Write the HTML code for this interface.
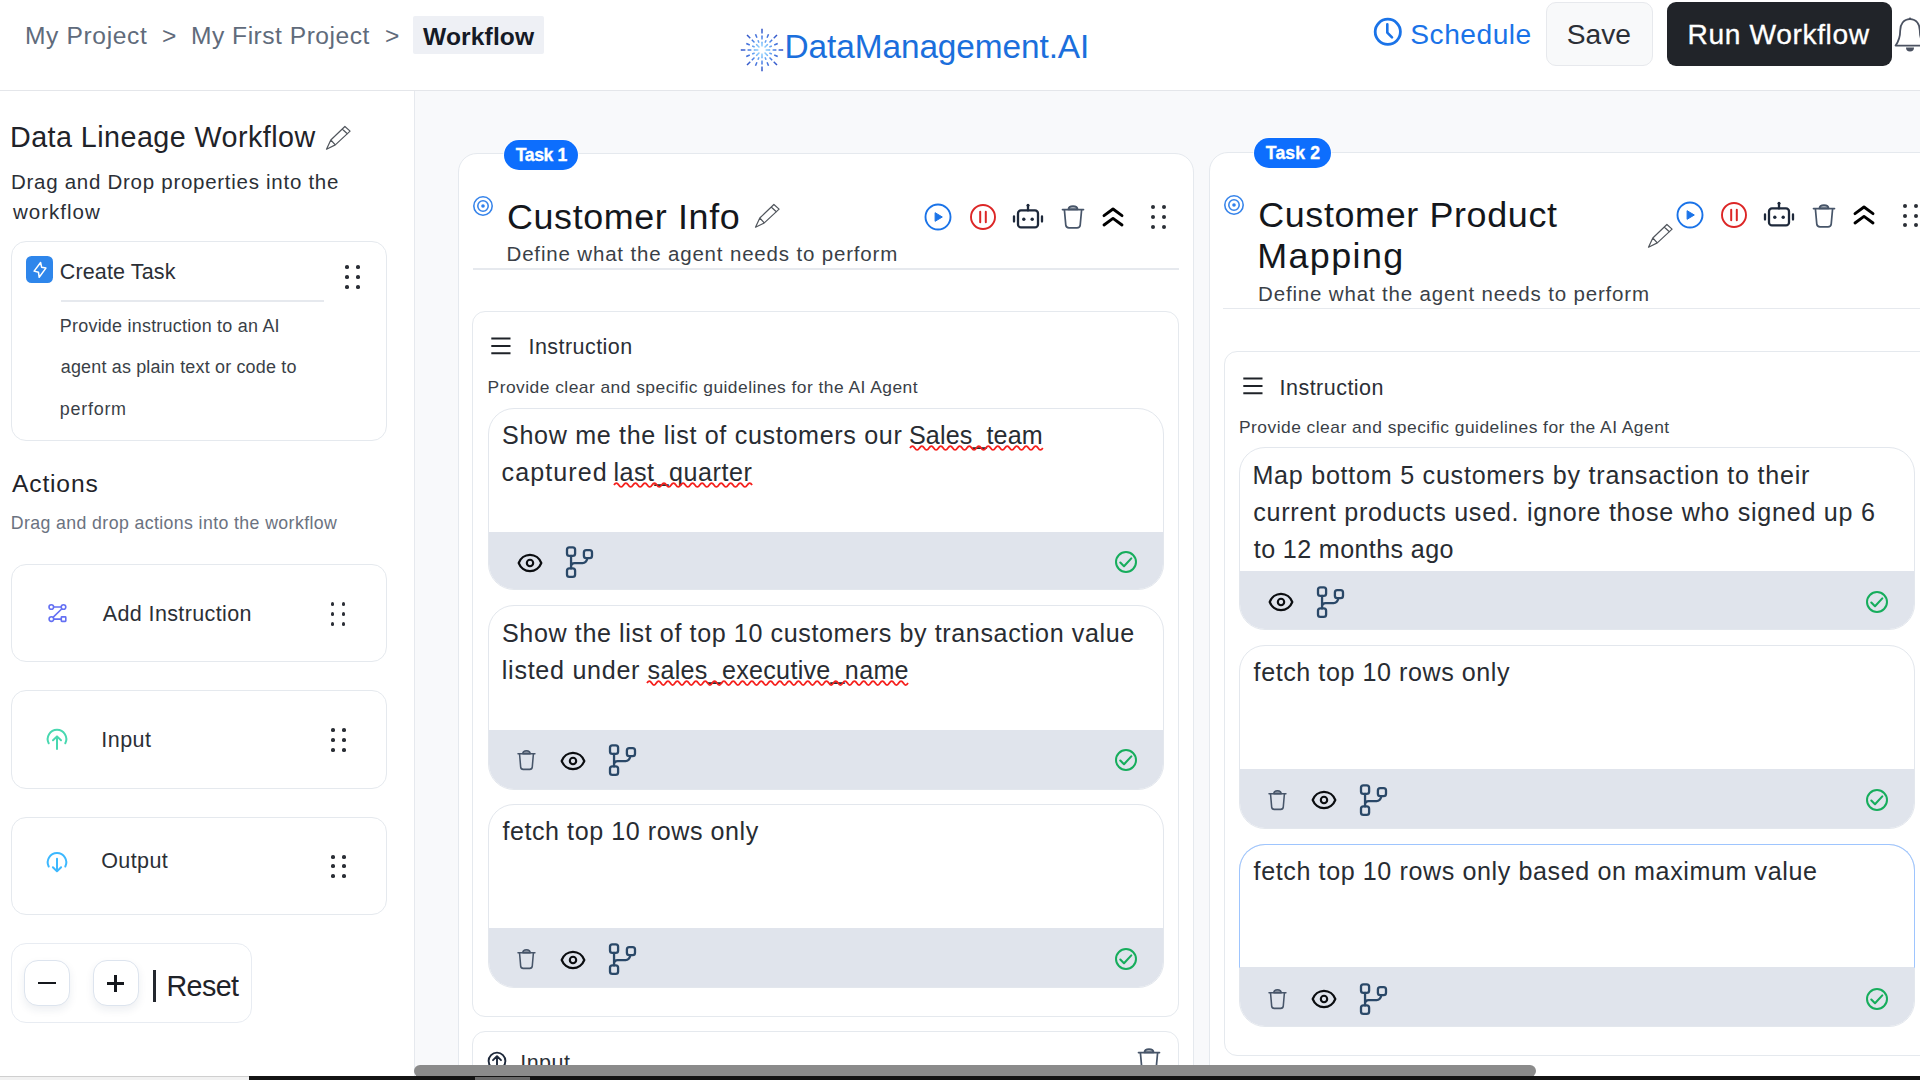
<!DOCTYPE html>
<html lang="en"><head><meta charset="utf-8"><title>Workflow - DataManagement.AI</title>
<style>
html,body{margin:0;padding:0;}
body{width:1920px;height:1080px;overflow:hidden;position:relative;background:#fff;font-family:"Liberation Sans", sans-serif;}
.t{position:absolute;white-space:nowrap;line-height:1;font-family:"Liberation Sans", sans-serif;}
svg{position:absolute;overflow:visible;}

.card{position:absolute;box-sizing:border-box;background:#fff;border:1.5px solid #e5e9ee;}
.dot{position:absolute;border-radius:50%;background:#2b2f36;}

</style></head><body>
<div style="position:absolute;left:0px;top:0px;width:1920px;height:1080px;background:#f8f9fb;"></div>
<div style="position:absolute;left:0px;top:91px;width:413.5px;height:985px;background:#fff;border-right:1.5px solid #e6e9ee;"></div>
<div style="position:absolute;left:0px;top:0px;width:1920px;height:90px;background:#fff;border-bottom:1.5px solid #e4e6ea;"></div>
<span class="t" style="left:25.00px;top:24.48px;font-size:24.6px;font-weight:400;color:#606b7b;letter-spacing:0.630px;">My Project</span>
<span class="t" style="left:162.00px;top:24.48px;font-size:24.6px;font-weight:400;color:#606b7b;letter-spacing:0.000px;">&gt;</span>
<span class="t" style="left:191.00px;top:24.48px;font-size:24.6px;font-weight:400;color:#606b7b;letter-spacing:0.502px;">My First Project</span>
<span class="t" style="left:385.00px;top:24.48px;font-size:24.6px;font-weight:400;color:#606b7b;letter-spacing:0.000px;">&gt;</span>
<div style="position:absolute;left:413px;top:15.5px;width:131px;height:38.5px;background:#eef0f5;border-radius:2px;"></div>
<span class="t" style="left:423.00px;top:24.98px;font-size:24.6px;font-weight:700;color:#151a26;letter-spacing:0.131px;">Workflow</span>
<svg style="left:737.7px;top:26.299999999999997px" width="48" height="48" viewBox="-24 -24 48 48"><defs><radialGradient id="sg" gradientUnits="userSpaceOnUse" cx="0" cy="0" r="21"><stop offset="0" stop-color="#b9e6ff"/><stop offset="0.3" stop-color="#7cc0fb"/><stop offset="0.6" stop-color="#4a7fe6"/><stop offset="1" stop-color="#3152c4"/></radialGradient></defs><g stroke="url(#sg)" stroke-width="1.5" stroke-linecap="butt" fill="none"><path d="M3.60 0.00L8.20 0.01"/><path d="M10.60 0.00L14.40 0.01"/><path d="M16.60 0.00L21.20 0.01"/><path d="M7.30 3.02L9.79 4.06"/><path d="M12.20 5.05L15.71 6.51"/><path d="M2.55 2.55L5.80 5.80"/><path d="M7.50 7.50L10.18 10.18"/><path d="M11.74 11.74L14.99 14.99"/><path d="M3.02 7.30L4.06 9.79"/><path d="M5.05 12.20L6.51 15.71"/><path d="M0.00 3.60L0.01 8.20"/><path d="M0.00 10.60L0.01 14.40"/><path d="M0.00 16.60L0.01 21.20"/><path d="M-3.02 7.30L-4.06 9.79"/><path d="M-5.05 12.20L-6.51 15.71"/><path d="M-2.55 2.55L-5.80 5.80"/><path d="M-7.50 7.50L-10.18 10.18"/><path d="M-11.74 11.74L-14.99 14.99"/><path d="M-7.30 3.02L-9.79 4.06"/><path d="M-12.20 5.05L-15.71 6.51"/><path d="M-3.60 0.00L-8.20 0.01"/><path d="M-10.60 0.00L-14.40 0.01"/><path d="M-16.60 0.00L-21.20 0.01"/><path d="M-7.30 -3.02L-9.79 -4.06"/><path d="M-12.20 -5.05L-15.71 -6.51"/><path d="M-2.55 -2.55L-5.80 -5.80"/><path d="M-7.50 -7.50L-10.18 -10.18"/><path d="M-11.74 -11.74L-14.99 -14.99"/><path d="M-3.02 -7.30L-4.06 -9.79"/><path d="M-5.05 -12.20L-6.51 -15.71"/><path d="M-0.00 -3.60L0.01 -8.20"/><path d="M-0.00 -10.60L0.01 -14.40"/><path d="M-0.00 -16.60L0.01 -21.20"/><path d="M3.02 -7.30L4.06 -9.79"/><path d="M5.05 -12.20L6.51 -15.71"/><path d="M2.55 -2.55L5.80 -5.80"/><path d="M7.50 -7.50L10.18 -10.18"/><path d="M11.74 -11.74L14.99 -14.99"/><path d="M7.30 -3.02L9.79 -4.06"/><path d="M12.20 -5.05L15.71 -6.51"/></g></svg>
<span class="t" style="left:784.60px;top:30.42px;font-size:33.41px;font-weight:400;color:#1b6fdc;letter-spacing:-0.107px;">DataManagement.AI</span>
<svg style="left:1372px;top:16px" width="32" height="32" viewBox="0 0 32 32"><circle cx="15.8" cy="15.8" r="12.6" fill="none" stroke="#1a73e8" stroke-width="2.8"/><path d="M15.3 8.2V16.6L20 21.4" fill="none" stroke="#1a73e8" stroke-width="2.6" stroke-linecap="round" stroke-linejoin="round"/></svg>
<span class="t" style="left:1410.25px;top:20.44px;font-size:28.19px;font-weight:400;color:#1a73e8;letter-spacing:0.498px;">Schedule</span>
<div style="position:absolute;left:1546px;top:2px;width:106.5px;height:63.5px;box-sizing:border-box;background:#f8f9fa;border:1.5px solid #e7e9ed;border-radius:10px;"></div>
<span class="t" style="left:1566.80px;top:20.44px;font-size:28.19px;font-weight:400;color:#2b2f36;letter-spacing:-0.024px;">Save</span>
<div style="position:absolute;left:1666.5px;top:1.75px;width:225.0px;height:64.25px;background:#212429;border-radius:9px;"></div>
<span class="t" style="left:1687.60px;top:20.44px;font-size:28.19px;font-weight:400;color:#ffffff;letter-spacing:0.594px;-webkit-text-stroke:0.3px #fff;">Run Workflow</span>
<svg style="left:1894px;top:16px" width="32" height="38" viewBox="0 0 32 38"><path d="M16 3.2C9.5 3.2 6.2 8.4 6.2 14.5C6.2 21 4.4 25.6 1.6 29.6H30.4C27.6 25.6 25.8 21 25.8 14.5C25.8 8.4 22.5 3.2 16 3.2Z" fill="none" stroke="#4b5261" stroke-width="1.8" stroke-linejoin="round"/><circle cx="16" cy="2.6" r="1.2" fill="#4b5261"/><path d="M12 31.5a4 4 0 0 0 8 0Z" fill="#4b5261"/></svg>
<span class="t" style="left:10.00px;top:122.91px;font-size:28.7px;font-weight:400;color:#1f2329;letter-spacing:0.458px;">Data Lineage Workflow</span>
<svg style="left:325.5px;top:126.3px" width="24.6" height="24" viewBox="0 0 24.6 24"><path d="M0.5 23.2L4.8 14L18.9 0.5L24.1 5.1L9.3 18.9Z M4.8 14L9.3 18.9 M16.2 3L21.3 7.8" fill="none" stroke="#50555c" stroke-width="1.2" stroke-linejoin="round" stroke-linecap="round"/></svg>
<span class="t" style="left:11.00px;top:171.95px;font-size:20.5px;font-weight:400;color:#2b2f36;letter-spacing:0.723px;">Drag and Drop properties into the</span>
<span class="t" style="left:13.00px;top:202.05px;font-size:20.5px;font-weight:400;color:#2b2f36;letter-spacing:1.010px;">workflow</span>
<div class="card" style="left:11px;top:240.5px;width:376px;height:200px;border-radius:15px;"></div>
<div style="position:absolute;left:25.7px;top:255.6px;width:27.8px;height:27.6px;border-radius:5.5px;background:#2e86eb;"></div>
<svg style="left:25.7px;top:255.6px" width="28" height="28" viewBox="0 0 28 28"><path d="M14.6 6.5L8.1 15.1L12.5 16.3L13.2 21.3L19.9 12.1L15.6 11.2Z" fill="none" stroke="#fff" stroke-width="1.5" stroke-linejoin="round"/></svg>
<span class="t" style="left:59.80px;top:261.68px;font-size:21.52px;font-weight:400;color:#2b2f36;letter-spacing:0.126px;">Create Task</span>
<div class="dot" style="left:344.85px;top:264.95px;width:3.7px;height:3.7px;background:#2b2f36"></div><div class="dot" style="left:344.85px;top:274.95px;width:3.7px;height:3.7px;background:#2b2f36"></div><div class="dot" style="left:344.85px;top:285.45px;width:3.7px;height:3.7px;background:#2b2f36"></div><div class="dot" style="left:356.25px;top:264.95px;width:3.7px;height:3.7px;background:#2b2f36"></div><div class="dot" style="left:356.25px;top:274.95px;width:3.7px;height:3.7px;background:#2b2f36"></div><div class="dot" style="left:356.25px;top:285.45px;width:3.7px;height:3.7px;background:#2b2f36"></div>
<div style="position:absolute;left:60.8px;top:300.4px;width:263.59999999999997px;height:1.400000000000034px;background:#e6e9ee;"></div>
<span class="t" style="left:59.80px;top:317.81px;font-size:17.94px;font-weight:400;color:#3a3f47;letter-spacing:0.238px;">Provide instruction to an AI</span>
<span class="t" style="left:60.80px;top:359.41px;font-size:17.94px;font-weight:400;color:#3a3f47;letter-spacing:0.180px;">agent as plain text or code to</span>
<span class="t" style="left:59.80px;top:400.51px;font-size:17.94px;font-weight:400;color:#3a3f47;letter-spacing:0.740px;">perform</span>
<span class="t" style="left:12.00px;top:471.58px;font-size:24.6px;font-weight:400;color:#1f2329;letter-spacing:0.841px;">Actions</span>
<span class="t" style="left:10.80px;top:515.49px;font-size:17.73px;font-weight:400;color:#6b7280;letter-spacing:0.389px;">Drag and drop actions into the workflow</span>
<div class="card" style="left:11px;top:563.8px;width:376px;height:98.6px;border-radius:15px;"></div>
<svg style="left:46.5px;top:603px" width="21" height="21" viewBox="0 0 21 21"><g fill="none" stroke="#6470f3" stroke-width="1.6"><circle cx="4.3" cy="4" r="2.3"/><circle cx="16.5" cy="4" r="2.3"/><circle cx="4.4" cy="16.1" r="2.3"/><rect x="14.3" y="13.9" width="4.5" height="4.5" rx="0.6"/><path d="M6.6 4H14.2 M14.9 5.7L6 14.4 M6.7 16.1H14.3"/></g></svg>
<span class="t" style="left:102.80px;top:604.18px;font-size:21.52px;font-weight:400;color:#2b2f36;letter-spacing:0.368px;">Add Instruction</span>
<div class="dot" style="left:330.65px;top:602.35px;width:3.7px;height:3.7px;background:#2b2f36"></div><div class="dot" style="left:330.65px;top:612.05px;width:3.7px;height:3.7px;background:#2b2f36"></div><div class="dot" style="left:330.65px;top:622.05px;width:3.7px;height:3.7px;background:#2b2f36"></div><div class="dot" style="left:341.65px;top:602.35px;width:3.7px;height:3.7px;background:#2b2f36"></div><div class="dot" style="left:341.65px;top:612.05px;width:3.7px;height:3.7px;background:#2b2f36"></div><div class="dot" style="left:341.65px;top:622.05px;width:3.7px;height:3.7px;background:#2b2f36"></div>
<div class="card" style="left:11px;top:690px;width:376px;height:98.6px;border-radius:15px;"></div>
<svg style="left:45.9px;top:728.3px" width="22" height="22" viewBox="0 0 22 22"><g fill="none" stroke="#48d8b0" stroke-width="2" stroke-linecap="round" stroke-linejoin="round"><path d="M2.71 15.32A9.3 9.3 0 1 1 19.29 15.32"/><path d="M11 21V8.6 M7 12.3L11 8.4L15 12.3"/></g></svg>
<span class="t" style="left:101.20px;top:729.78px;font-size:21.52px;font-weight:400;color:#2b2f36;letter-spacing:0.506px;">Input</span>
<div class="dot" style="left:330.85px;top:728.15px;width:3.7px;height:3.7px;background:#2b2f36"></div><div class="dot" style="left:330.85px;top:738.15px;width:3.7px;height:3.7px;background:#2b2f36"></div><div class="dot" style="left:330.85px;top:748.35px;width:3.7px;height:3.7px;background:#2b2f36"></div><div class="dot" style="left:341.95px;top:728.15px;width:3.7px;height:3.7px;background:#2b2f36"></div><div class="dot" style="left:341.95px;top:738.15px;width:3.7px;height:3.7px;background:#2b2f36"></div><div class="dot" style="left:341.95px;top:748.35px;width:3.7px;height:3.7px;background:#2b2f36"></div>
<div class="card" style="left:11px;top:816.7px;width:376px;height:98px;border-radius:15px;"></div>
<svg style="left:45.9px;top:851px" width="22" height="22" viewBox="0 0 22 22"><g fill="none" stroke="#3cb8ff" stroke-width="2" stroke-linecap="round" stroke-linejoin="round"><path d="M2.71 15.5A9.3 9.3 0 1 1 19.29 15.5"/><path d="M11 7.8V20.2 M6.9 16.2L11 20.4L15.1 16.2"/></g></svg>
<span class="t" style="left:101.20px;top:850.88px;font-size:21.52px;font-weight:400;color:#2b2f36;letter-spacing:0.398px;">Output</span>
<div class="dot" style="left:330.85px;top:854.85px;width:3.7px;height:3.7px;background:#2b2f36"></div><div class="dot" style="left:330.85px;top:864.35px;width:3.7px;height:3.7px;background:#2b2f36"></div><div class="dot" style="left:330.85px;top:874.35px;width:3.7px;height:3.7px;background:#2b2f36"></div><div class="dot" style="left:341.95px;top:854.85px;width:3.7px;height:3.7px;background:#2b2f36"></div><div class="dot" style="left:341.95px;top:864.35px;width:3.7px;height:3.7px;background:#2b2f36"></div><div class="dot" style="left:341.95px;top:874.35px;width:3.7px;height:3.7px;background:#2b2f36"></div>
<div class="card" style="left:11px;top:943px;width:241px;height:79.5px;border-radius:15px;border-color:#e8ecf2"></div>
<div style="position:absolute;left:23.6px;top:959.7px;width:46.199999999999996px;height:46.09999999999991px;box-sizing:border-box;background:#fff;border:1.5px solid #dde4ee;border-radius:14px;box-shadow:0 4px 8px rgba(30,50,90,0.08);"></div>
<div style="position:absolute;left:92.6px;top:959.7px;width:46.0px;height:46.09999999999991px;box-sizing:border-box;background:#fff;border:1.5px solid #dde4ee;border-radius:14px;box-shadow:0 4px 8px rgba(30,50,90,0.08);"></div>
<div style="position:absolute;left:38.4px;top:981.5px;width:17.200000000000003px;height:2.6000000000000227px;background:#15181d;"></div>
<div style="position:absolute;left:106.9px;top:982.0px;width:17.39999999999999px;height:2.6000000000000227px;background:#15181d;"></div>
<div style="position:absolute;left:114.3px;top:974.6px;width:2.6000000000000085px;height:17.399999999999977px;background:#15181d;"></div>
<div style="position:absolute;left:153.3px;top:970px;width:2.3999999999999773px;height:32px;background:#23272e;"></div>
<span class="t" style="left:166.40px;top:972.41px;font-size:28.7px;font-weight:400;color:#1f2329;letter-spacing:-0.593px;">Reset</span>
<div class="card" style="left:458px;top:153px;width:735.5px;height:1000px;border-radius:19px;"></div>
<div style="position:absolute;left:504.1px;top:139.6px;width:73.89999999999998px;height:30.0px;background:#0d6efd;border-radius:16px;box-shadow:0 0 0 0.8px rgba(255,255,255,0.7);"></div>
<span class="t" style="left:515.80px;top:146.68px;font-size:17.63px;font-weight:700;color:#fff;letter-spacing:-0.424px;-webkit-text-stroke:0.35px #fff;">Task 1</span>
<svg style="left:471.7px;top:195px" width="22" height="22" viewBox="-11 -11 22 22"><circle r="9.2" fill="none" stroke="#3583ea" stroke-width="1.55"/><circle r="5.2" fill="none" stroke="#3583ea" stroke-width="1.55"/><circle r="1.8" fill="#2f80ed"/></svg>
<span class="t" style="left:507.00px;top:200.43px;font-size:35.88px;font-weight:400;color:#14171c;letter-spacing:0.616px;">Customer Info</span>
<svg style="left:754.6px;top:204.3px" width="24.6" height="24" viewBox="0 0 24.6 24"><path d="M0.5 23.2L4.8 14L18.9 0.5L24.1 5.1L9.3 18.9Z M4.8 14L9.3 18.9 M16.2 3L21.3 7.8" fill="none" stroke="#50555c" stroke-width="1.2" stroke-linejoin="round" stroke-linecap="round"/></svg>
<span class="t" style="left:506.50px;top:243.95px;font-size:20.5px;font-weight:400;color:#3a3f47;letter-spacing:0.830px;">Define what the agent needs to perform</span>
<svg style="left:923.1px;top:202px" width="30" height="30" viewBox="-15 -15 30 30"><circle r="12.5" fill="none" stroke="#1a73e8" stroke-width="1.9"/><path d="M-2.9 -4.3L4.3 0L-2.9 4.3Z" fill="#1a73e8" stroke="#1a73e8" stroke-width="1" stroke-linejoin="round"/></svg>
<svg style="left:967.9px;top:202px" width="30" height="30" viewBox="-15 -15 30 30"><circle r="12" fill="none" stroke="#dc2626" stroke-width="1.9"/><path d="M-2.8 -5.2V5.2 M2.8 -5.2V5.2" fill="none" stroke="#dc2626" stroke-width="2" stroke-linecap="round"/></svg>
<svg style="left:1011.5999999999999px;top:202.5px" width="32" height="28" viewBox="-16 -14 32 28"><g fill="none" stroke="#1e293b" stroke-width="2.3" stroke-linecap="round" stroke-linejoin="round"><rect x="-10" y="-6.6" width="20" height="17" rx="3"/><path d="M0 -6.6V-11.6 M-14 -0.5V4.5 M14 -0.5V4.5"/></g><circle cx="0" cy="-11.7" r="1.5" fill="#1e293b"/><circle cx="-4.2" cy="2.3" r="1.7" fill="#1e293b"/><circle cx="4.2" cy="2.3" r="1.7" fill="#1e293b"/></svg>
<svg style="left:1059.5px;top:204.0px" width="26.0" height="26.0" viewBox="-13 -13 26 26" preserveAspectRatio="none"><g fill="none" stroke="#475569" stroke-width="1.70" stroke-linecap="round" stroke-linejoin="round"><path d="M-10.5 -7.4H10.5"/><path d="M-4.6 -7.6C-4.4 -10.4 -3 -10.9 0 -10.9C3 -10.9 4.4 -10.4 4.6 -7.6Z" fill="#475569" fill-opacity="0.45"/><path d="M-8.6 -7.2L-7.2 8.2C-7 10 -5.8 10.8 -4 10.8H4C5.8 10.8 7 10 7.2 8.2L8.6 -7.2"/></g></svg>
<svg style="left:1099.8px;top:203.5px" width="26" height="26" viewBox="-13 -13 26 26"><g fill="none" stroke="#000" stroke-width="2.9" stroke-linecap="round" stroke-linejoin="round"><path d="M-9 -1.4L0 -8L9 -1.4"/><path d="M-9 8L0 1.4L9 8"/></g></svg>
<div class="dot" style="left:1151.40px;top:205.30px;width:4.0px;height:4.0px;background:#2b2f36"></div><div class="dot" style="left:1151.40px;top:215.20px;width:4.0px;height:4.0px;background:#2b2f36"></div><div class="dot" style="left:1151.40px;top:224.90px;width:4.0px;height:4.0px;background:#2b2f36"></div><div class="dot" style="left:1162.00px;top:205.30px;width:4.0px;height:4.0px;background:#2b2f36"></div><div class="dot" style="left:1162.00px;top:215.20px;width:4.0px;height:4.0px;background:#2b2f36"></div><div class="dot" style="left:1162.00px;top:224.90px;width:4.0px;height:4.0px;background:#2b2f36"></div>
<div style="position:absolute;left:472.5px;top:268.3px;width:706.3px;height:1.5px;background:#e6e9ee;"></div>
<div class="card" style="left:472px;top:311px;width:707px;height:705.5px;border-radius:13px;"></div>
<svg style="left:491.2px;top:337px" width="20" height="18" viewBox="0 0 20 18"><path d="M0.3 1.5H19.5 M0.3 9H19.5 M0.3 16.3H19.5" stroke="#1f2329" stroke-width="1.9" fill="none"/></svg>
<span class="t" style="left:528.50px;top:337.33px;font-size:21.52px;font-weight:400;color:#2b2f36;letter-spacing:0.446px;">Instruction</span>
<span class="t" style="left:487.60px;top:379.05px;font-size:17.42px;font-weight:400;color:#3a3f47;letter-spacing:0.462px;">Provide clear and specific guidelines for the AI Agent</span>
<div style="position:absolute;box-sizing:border-box;left:487.5px;top:407.5px;width:676.2px;height:182.29999999999995px;border-radius:26px;background:#fff;border:1.5px solid #e3e7ed;overflow:hidden;"><div style="position:absolute;left:-2px;right:-2px;top:123.39999999999998px;bottom:-2px;background:#e0e4ec;"></div></div>
<span class="t" style="left:502.00px;top:423.04px;font-size:25.11px;font-weight:400;color:#282c32;letter-spacing:0.677px;">Show me the list of customers our</span>
<span class="t" style="left:909.00px;top:423.04px;font-size:25.11px;font-weight:400;color:#282c32;letter-spacing:0.124px;">Sales_team</span>
<svg style="left:909.5px;top:445.0px" width="132.79999999999995" height="6" viewBox="0 0 132.79999999999995 6"><path d="M0 3 q2.371 -4.0 4.743 0 q2.371 4.0 4.743 0 q2.371 -4.0 4.743 0 q2.371 4.0 4.743 0 q2.371 -4.0 4.743 0 q2.371 4.0 4.743 0 q2.371 -4.0 4.743 0 q2.371 4.0 4.743 0 q2.371 -4.0 4.743 0 q2.371 4.0 4.743 0 q2.371 -4.0 4.743 0 q2.371 4.0 4.743 0 q2.371 -4.0 4.743 0 q2.371 4.0 4.743 0 q2.371 -4.0 4.743 0 q2.371 4.0 4.743 0 q2.371 -4.0 4.743 0 q2.371 4.0 4.743 0 q2.371 -4.0 4.743 0 q2.371 4.0 4.743 0 q2.371 -4.0 4.743 0 q2.371 4.0 4.743 0 q2.371 -4.0 4.743 0 q2.371 4.0 4.743 0 q2.371 -4.0 4.743 0 q2.371 4.0 4.743 0 q2.371 -4.0 4.743 0 q2.371 4.0 4.743 0" fill="none" stroke="#f5201d" stroke-width="1.75"/></svg>
<span class="t" style="left:501.60px;top:460.24px;font-size:25.11px;font-weight:400;color:#282c32;letter-spacing:1.064px;">captured</span>
<span class="t" style="left:613.40px;top:460.24px;font-size:25.11px;font-weight:400;color:#282c32;letter-spacing:0.533px;">last_quarter</span>
<svg style="left:613.9px;top:482.2px" width="138.10000000000002" height="6" viewBox="0 0 138.10000000000002 6"><path d="M0 3 q2.381 -4.0 4.762 0 q2.381 4.0 4.762 0 q2.381 -4.0 4.762 0 q2.381 4.0 4.762 0 q2.381 -4.0 4.762 0 q2.381 4.0 4.762 0 q2.381 -4.0 4.762 0 q2.381 4.0 4.762 0 q2.381 -4.0 4.762 0 q2.381 4.0 4.762 0 q2.381 -4.0 4.762 0 q2.381 4.0 4.762 0 q2.381 -4.0 4.762 0 q2.381 4.0 4.762 0 q2.381 -4.0 4.762 0 q2.381 4.0 4.762 0 q2.381 -4.0 4.762 0 q2.381 4.0 4.762 0 q2.381 -4.0 4.762 0 q2.381 4.0 4.762 0 q2.381 -4.0 4.762 0 q2.381 4.0 4.762 0 q2.381 -4.0 4.762 0 q2.381 4.0 4.762 0 q2.381 -4.0 4.762 0 q2.381 4.0 4.762 0 q2.381 -4.0 4.762 0 q2.381 4.0 4.762 0 q2.381 -4.0 4.762 0" fill="none" stroke="#f5201d" stroke-width="1.75"/></svg>
<svg style="left:515.5px;top:551.5999999999999px" width="28" height="22" viewBox="-14 -11 28 22"><path d="M-11.3 0C-9.6 -4.6 -5.2 -8.1 0 -8.1C5.2 -8.1 9.6 -4.6 11.3 0C9.6 4.6 5.2 8.1 0 8.1C-5.2 8.1 -9.6 4.6 -11.3 0Z" fill="none" stroke="#0b0d10" stroke-width="2.2" stroke-linejoin="round"/><circle r="3.2" fill="none" stroke="#0b0d10" stroke-width="2.1"/></svg>
<svg style="left:563.9px;top:546.1999999999999px" width="30" height="32" viewBox="0 0 30 32"><g fill="none" stroke="#2a4868" stroke-width="2.3" stroke-linejoin="round" stroke-linecap="round"><rect x="3" y="1.4" width="8.1" height="8.4" rx="2.4"/><rect x="3" y="22.4" width="8.1" height="8.4" rx="2.4"/><rect x="19.9" y="4.1" width="8.1" height="8.0" rx="2.4"/><path d="M7.05 9.8V22.4 M23.4 12.3C22.6 15.6 21.4 17.1 18.6 17.1H10.6C8.4 17.1 7.05 18.4 7.05 20.8"/></g></svg>
<svg style="left:1112.5px;top:548.8px" width="26" height="26" viewBox="-13 -13 26 26"><circle r="10" fill="none" stroke="#16ad5c" stroke-width="2"/><path d="M-5.7 0.6L-2 4.2L5.3 -3.6" fill="none" stroke="#16ad5c" stroke-width="2.1" stroke-linecap="round" stroke-linejoin="round"/></svg>
<div style="position:absolute;box-sizing:border-box;left:487.5px;top:605.3px;width:676.2px;height:184.5px;border-radius:26px;background:#fff;border:1.5px solid #e3e7ed;overflow:hidden;"><div style="position:absolute;left:-2px;right:-2px;top:123.40000000000009px;bottom:-2px;background:#e0e4ec;"></div></div>
<span class="t" style="left:502.00px;top:620.94px;font-size:25.11px;font-weight:400;color:#282c32;letter-spacing:0.606px;">Show the list of top 10 customers by transaction value</span>
<span class="t" style="left:501.80px;top:658.14px;font-size:25.11px;font-weight:400;color:#282c32;letter-spacing:0.713px;">listed under</span>
<span class="t" style="left:647.60px;top:658.14px;font-size:25.11px;font-weight:400;color:#282c32;letter-spacing:0.291px;">sales_executive_name</span>
<svg style="left:647.1px;top:680.1px" width="261.0" height="6" viewBox="0 0 261.0 6"><path d="M0 3 q2.330 -4.0 4.661 0 q2.330 4.0 4.661 0 q2.330 -4.0 4.661 0 q2.330 4.0 4.661 0 q2.330 -4.0 4.661 0 q2.330 4.0 4.661 0 q2.330 -4.0 4.661 0 q2.330 4.0 4.661 0 q2.330 -4.0 4.661 0 q2.330 4.0 4.661 0 q2.330 -4.0 4.661 0 q2.330 4.0 4.661 0 q2.330 -4.0 4.661 0 q2.330 4.0 4.661 0 q2.330 -4.0 4.661 0 q2.330 4.0 4.661 0 q2.330 -4.0 4.661 0 q2.330 4.0 4.661 0 q2.330 -4.0 4.661 0 q2.330 4.0 4.661 0 q2.330 -4.0 4.661 0 q2.330 4.0 4.661 0 q2.330 -4.0 4.661 0 q2.330 4.0 4.661 0 q2.330 -4.0 4.661 0 q2.330 4.0 4.661 0 q2.330 -4.0 4.661 0 q2.330 4.0 4.661 0 q2.330 -4.0 4.661 0 q2.330 4.0 4.661 0 q2.330 -4.0 4.661 0 q2.330 4.0 4.661 0 q2.330 -4.0 4.661 0 q2.330 4.0 4.661 0 q2.330 -4.0 4.661 0 q2.330 4.0 4.661 0 q2.330 -4.0 4.661 0 q2.330 4.0 4.661 0 q2.330 -4.0 4.661 0 q2.330 4.0 4.661 0 q2.330 -4.0 4.661 0 q2.330 4.0 4.661 0 q2.330 -4.0 4.661 0 q2.330 4.0 4.661 0 q2.330 -4.0 4.661 0 q2.330 4.0 4.661 0 q2.330 -4.0 4.661 0 q2.330 4.0 4.661 0 q2.330 -4.0 4.661 0 q2.330 4.0 4.661 0 q2.330 -4.0 4.661 0 q2.330 4.0 4.661 0 q2.330 -4.0 4.661 0 q2.330 4.0 4.661 0 q2.330 -4.0 4.661 0 q2.330 4.0 4.661 0" fill="none" stroke="#f5201d" stroke-width="1.75"/></svg>
<svg style="left:515.8309734513274px;top:749.0028318584071px" width="20.93805309734513" height="22.194336283185837" viewBox="-13 -13 26 26" preserveAspectRatio="none"><g fill="none" stroke="#475569" stroke-width="1.92" stroke-linecap="round" stroke-linejoin="round"><path d="M-10.5 -7.4H10.5"/><path d="M-4.6 -7.6C-4.4 -10.4 -3 -10.9 0 -10.9C3 -10.9 4.4 -10.4 4.6 -7.6Z" fill="#475569" fill-opacity="0.45"/><path d="M-8.6 -7.2L-7.2 8.2C-7 10 -5.8 10.8 -4 10.8H4C5.8 10.8 7 10 7.2 8.2L8.6 -7.2"/></g></svg>
<svg style="left:558.8px;top:749.8px" width="28" height="22" viewBox="-14 -11 28 22"><path d="M-11.3 0C-9.6 -4.6 -5.2 -8.1 0 -8.1C5.2 -8.1 9.6 -4.6 11.3 0C9.6 4.6 5.2 8.1 0 8.1C-5.2 8.1 -9.6 4.6 -11.3 0Z" fill="none" stroke="#0b0d10" stroke-width="2.2" stroke-linejoin="round"/><circle r="3.2" fill="none" stroke="#0b0d10" stroke-width="2.1"/></svg>
<svg style="left:606.9px;top:744.4px" width="30" height="32" viewBox="0 0 30 32"><g fill="none" stroke="#2a4868" stroke-width="2.3" stroke-linejoin="round" stroke-linecap="round"><rect x="3" y="1.4" width="8.1" height="8.4" rx="2.4"/><rect x="3" y="22.4" width="8.1" height="8.4" rx="2.4"/><rect x="19.9" y="4.1" width="8.1" height="8.0" rx="2.4"/><path d="M7.05 9.8V22.4 M23.4 12.3C22.6 15.6 21.4 17.1 18.6 17.1H10.6C8.4 17.1 7.05 18.4 7.05 20.8"/></g></svg>
<svg style="left:1112.5px;top:747px" width="26" height="26" viewBox="-13 -13 26 26"><circle r="10" fill="none" stroke="#16ad5c" stroke-width="2"/><path d="M-5.7 0.6L-2 4.2L5.3 -3.6" fill="none" stroke="#16ad5c" stroke-width="2.1" stroke-linecap="round" stroke-linejoin="round"/></svg>
<div style="position:absolute;box-sizing:border-box;left:487.5px;top:804.4px;width:676.2px;height:183.60000000000002px;border-radius:26px;background:#fff;border:1.5px solid #e3e7ed;overflow:hidden;"><div style="position:absolute;left:-2px;right:-2px;top:123.0px;bottom:-2px;background:#e0e4ec;"></div></div>
<span class="t" style="left:502.40px;top:819.14px;font-size:25.11px;font-weight:400;color:#282c32;letter-spacing:0.552px;">fetch top 10 rows only</span>
<svg style="left:515.8309734513274px;top:947.7028318584072px" width="20.93805309734513" height="22.194336283185837" viewBox="-13 -13 26 26" preserveAspectRatio="none"><g fill="none" stroke="#475569" stroke-width="1.92" stroke-linecap="round" stroke-linejoin="round"><path d="M-10.5 -7.4H10.5"/><path d="M-4.6 -7.6C-4.4 -10.4 -3 -10.9 0 -10.9C3 -10.9 4.4 -10.4 4.6 -7.6Z" fill="#475569" fill-opacity="0.45"/><path d="M-8.6 -7.2L-7.2 8.2C-7 10 -5.8 10.8 -4 10.8H4C5.8 10.8 7 10 7.2 8.2L8.6 -7.2"/></g></svg>
<svg style="left:558.8px;top:948.5px" width="28" height="22" viewBox="-14 -11 28 22"><path d="M-11.3 0C-9.6 -4.6 -5.2 -8.1 0 -8.1C5.2 -8.1 9.6 -4.6 11.3 0C9.6 4.6 5.2 8.1 0 8.1C-5.2 8.1 -9.6 4.6 -11.3 0Z" fill="none" stroke="#0b0d10" stroke-width="2.2" stroke-linejoin="round"/><circle r="3.2" fill="none" stroke="#0b0d10" stroke-width="2.1"/></svg>
<svg style="left:606.9px;top:943.1px" width="30" height="32" viewBox="0 0 30 32"><g fill="none" stroke="#2a4868" stroke-width="2.3" stroke-linejoin="round" stroke-linecap="round"><rect x="3" y="1.4" width="8.1" height="8.4" rx="2.4"/><rect x="3" y="22.4" width="8.1" height="8.4" rx="2.4"/><rect x="19.9" y="4.1" width="8.1" height="8.0" rx="2.4"/><path d="M7.05 9.8V22.4 M23.4 12.3C22.6 15.6 21.4 17.1 18.6 17.1H10.6C8.4 17.1 7.05 18.4 7.05 20.8"/></g></svg>
<svg style="left:1112.5px;top:945.7px" width="26" height="26" viewBox="-13 -13 26 26"><circle r="10" fill="none" stroke="#16ad5c" stroke-width="2"/><path d="M-5.7 0.6L-2 4.2L5.3 -3.6" fill="none" stroke="#16ad5c" stroke-width="2.1" stroke-linecap="round" stroke-linejoin="round"/></svg>
<div class="card" style="left:472px;top:1031px;width:707px;height:200px;border-radius:13px;"></div>
<svg style="left:485.7px;top:1050px" width="22" height="22" viewBox="-11 -11 22 22"><g fill="none" stroke="#1e293b" stroke-width="1.9" stroke-linecap="round" stroke-linejoin="round"><circle r="8.4"/><path d="M0 5V-4.6 M-4 -0.8L0 -4.8L4 -0.8"/></g></svg>
<span class="t" style="left:520.20px;top:1052.58px;font-size:21.52px;font-weight:400;color:#2b2f36;letter-spacing:0.481px;">Input</span>
<svg style="left:1135.5px;top:1047.0px" width="26.0" height="26.0" viewBox="-13 -13 26 26" preserveAspectRatio="none"><g fill="none" stroke="#475569" stroke-width="1.70" stroke-linecap="round" stroke-linejoin="round"><path d="M-10.5 -7.4H10.5"/><path d="M-4.6 -7.6C-4.4 -10.4 -3 -10.9 0 -10.9C3 -10.9 4.4 -10.4 4.6 -7.6Z" fill="#475569" fill-opacity="0.45"/><path d="M-8.6 -7.2L-7.2 8.2C-7 10 -5.8 10.8 -4 10.8H4C5.8 10.8 7 10 7.2 8.2L8.6 -7.2"/></g></svg>
<div class="card" style="left:1209px;top:152.2px;width:800px;height:1000px;border-radius:19px;"></div>
<div style="position:absolute;left:1254px;top:138.4px;width:76.59999999999991px;height:29.799999999999983px;background:#0d6efd;border-radius:16px;box-shadow:0 0 0 0.8px rgba(255,255,255,0.7);"></div>
<span class="t" style="left:1265.80px;top:145.28px;font-size:17.63px;font-weight:700;color:#fff;letter-spacing:0.136px;-webkit-text-stroke:0.35px #fff;">Task 2</span>
<svg style="left:1223px;top:193.6px" width="22" height="22" viewBox="-11 -11 22 22"><circle r="9.2" fill="none" stroke="#3583ea" stroke-width="1.55"/><circle r="5.2" fill="none" stroke="#3583ea" stroke-width="1.55"/><circle r="1.8" fill="#2f80ed"/></svg>
<span class="t" style="left:1258.20px;top:198.43px;font-size:35.88px;font-weight:400;color:#14171c;letter-spacing:0.644px;">Customer Product</span>
<span class="t" style="left:1257.20px;top:239.23px;font-size:35.88px;font-weight:400;color:#14171c;letter-spacing:1.398px;">Mapping</span>
<svg style="left:1647.8px;top:223.9px" width="24.6" height="24" viewBox="0 0 24.6 24"><path d="M0.5 23.2L4.8 14L18.9 0.5L24.1 5.1L9.3 18.9Z M4.8 14L9.3 18.9 M16.2 3L21.3 7.8" fill="none" stroke="#50555c" stroke-width="1.2" stroke-linejoin="round" stroke-linecap="round"/></svg>
<span class="t" style="left:1258.00px;top:283.55px;font-size:20.5px;font-weight:400;color:#3a3f47;letter-spacing:0.837px;">Define what the agent needs to perform</span>
<svg style="left:1674.6px;top:200.4px" width="30" height="30" viewBox="-15 -15 30 30"><circle r="12.5" fill="none" stroke="#1a73e8" stroke-width="1.9"/><path d="M-2.9 -4.3L4.3 0L-2.9 4.3Z" fill="#1a73e8" stroke="#1a73e8" stroke-width="1" stroke-linejoin="round"/></svg>
<svg style="left:1719.2px;top:200.4px" width="30" height="30" viewBox="-15 -15 30 30"><circle r="12" fill="none" stroke="#dc2626" stroke-width="1.9"/><path d="M-2.8 -5.2V5.2 M2.8 -5.2V5.2" fill="none" stroke="#dc2626" stroke-width="2" stroke-linecap="round"/></svg>
<svg style="left:1763.4px;top:201px" width="32" height="28" viewBox="-16 -14 32 28"><g fill="none" stroke="#1e293b" stroke-width="2.3" stroke-linecap="round" stroke-linejoin="round"><rect x="-10" y="-6.6" width="20" height="17" rx="3"/><path d="M0 -6.6V-11.6 M-14 -0.5V4.5 M14 -0.5V4.5"/></g><circle cx="0" cy="-11.7" r="1.5" fill="#1e293b"/><circle cx="-4.2" cy="2.3" r="1.7" fill="#1e293b"/><circle cx="4.2" cy="2.3" r="1.7" fill="#1e293b"/></svg>
<svg style="left:1810.6px;top:202.6px" width="26.0" height="26.0" viewBox="-13 -13 26 26" preserveAspectRatio="none"><g fill="none" stroke="#475569" stroke-width="1.70" stroke-linecap="round" stroke-linejoin="round"><path d="M-10.5 -7.4H10.5"/><path d="M-4.6 -7.6C-4.4 -10.4 -3 -10.9 0 -10.9C3 -10.9 4.4 -10.4 4.6 -7.6Z" fill="#475569" fill-opacity="0.45"/><path d="M-8.6 -7.2L-7.2 8.2C-7 10 -5.8 10.8 -4 10.8H4C5.8 10.8 7 10 7.2 8.2L8.6 -7.2"/></g></svg>
<svg style="left:1851.3px;top:202px" width="26" height="26" viewBox="-13 -13 26 26"><g fill="none" stroke="#000" stroke-width="2.9" stroke-linecap="round" stroke-linejoin="round"><path d="M-9 -1.4L0 -8L9 -1.4"/><path d="M-9 8L0 1.4L9 8"/></g></svg>
<div class="dot" style="left:1903.00px;top:203.60px;width:4.0px;height:4.0px;background:#2b2f36"></div><div class="dot" style="left:1903.00px;top:213.50px;width:4.0px;height:4.0px;background:#2b2f36"></div><div class="dot" style="left:1903.00px;top:223.20px;width:4.0px;height:4.0px;background:#2b2f36"></div><div class="dot" style="left:1913.60px;top:203.60px;width:4.0px;height:4.0px;background:#2b2f36"></div><div class="dot" style="left:1913.60px;top:213.50px;width:4.0px;height:4.0px;background:#2b2f36"></div><div class="dot" style="left:1913.60px;top:223.20px;width:4.0px;height:4.0px;background:#2b2f36"></div>
<div style="position:absolute;left:1223px;top:307.5px;width:702px;height:1.5px;background:#e6e9ee;"></div>
<div class="card" style="left:1223.5px;top:351px;width:800px;height:704.5px;border-radius:13px;"></div>
<svg style="left:1243px;top:377px" width="20" height="18" viewBox="0 0 20 18"><path d="M0.3 1.5H19.5 M0.3 9H19.5 M0.3 16.3H19.5" stroke="#1f2329" stroke-width="1.9" fill="none"/></svg>
<span class="t" style="left:1279.60px;top:377.68px;font-size:21.52px;font-weight:400;color:#2b2f36;letter-spacing:0.461px;">Instruction</span>
<span class="t" style="left:1239.00px;top:419.05px;font-size:17.42px;font-weight:400;color:#3a3f47;letter-spacing:0.466px;">Provide clear and specific guidelines for the AI Agent</span>
<div style="position:absolute;box-sizing:border-box;left:1239px;top:447.3px;width:676px;height:182.7px;border-radius:26px;background:#fff;border:1.5px solid #e3e7ed;overflow:hidden;"><div style="position:absolute;left:-2px;right:-2px;top:122.99999999999994px;bottom:-2px;background:#e0e4ec;"></div></div>
<span class="t" style="left:1252.40px;top:463.04px;font-size:25.11px;font-weight:400;color:#282c32;letter-spacing:0.747px;">Map bottom 5 customers by transaction to their</span>
<span class="t" style="left:1253.20px;top:500.24px;font-size:25.11px;font-weight:400;color:#282c32;letter-spacing:0.738px;">current products used. ignore those who signed up 6</span>
<span class="t" style="left:1253.80px;top:537.44px;font-size:25.11px;font-weight:400;color:#282c32;letter-spacing:0.375px;">to 12 months ago</span>
<svg style="left:1267px;top:591.3px" width="28" height="22" viewBox="-14 -11 28 22"><path d="M-11.3 0C-9.6 -4.6 -5.2 -8.1 0 -8.1C5.2 -8.1 9.6 -4.6 11.3 0C9.6 4.6 5.2 8.1 0 8.1C-5.2 8.1 -9.6 4.6 -11.3 0Z" fill="none" stroke="#0b0d10" stroke-width="2.2" stroke-linejoin="round"/><circle r="3.2" fill="none" stroke="#0b0d10" stroke-width="2.1"/></svg>
<svg style="left:1315.4px;top:585.9px" width="30" height="32" viewBox="0 0 30 32"><g fill="none" stroke="#2a4868" stroke-width="2.3" stroke-linejoin="round" stroke-linecap="round"><rect x="3" y="1.4" width="8.1" height="8.4" rx="2.4"/><rect x="3" y="22.4" width="8.1" height="8.4" rx="2.4"/><rect x="19.9" y="4.1" width="8.1" height="8.0" rx="2.4"/><path d="M7.05 9.8V22.4 M23.4 12.3C22.6 15.6 21.4 17.1 18.6 17.1H10.6C8.4 17.1 7.05 18.4 7.05 20.8"/></g></svg>
<svg style="left:1863.8px;top:588.5px" width="26" height="26" viewBox="-13 -13 26 26"><circle r="10" fill="none" stroke="#16ad5c" stroke-width="2"/><path d="M-5.7 0.6L-2 4.2L5.3 -3.6" fill="none" stroke="#16ad5c" stroke-width="2.1" stroke-linecap="round" stroke-linejoin="round"/></svg>
<div style="position:absolute;box-sizing:border-box;left:1239px;top:645px;width:676px;height:184px;border-radius:26px;background:#fff;border:1.5px solid #e3e7ed;overflow:hidden;"><div style="position:absolute;left:-2px;right:-2px;top:123.29999999999995px;bottom:-2px;background:#e0e4ec;"></div></div>
<span class="t" style="left:1253.60px;top:660.04px;font-size:25.11px;font-weight:400;color:#282c32;letter-spacing:0.557px;">fetch top 10 rows only</span>
<svg style="left:1267.3309734513273px;top:788.5028318584071px" width="20.93805309734513" height="22.194336283185837" viewBox="-13 -13 26 26" preserveAspectRatio="none"><g fill="none" stroke="#475569" stroke-width="1.92" stroke-linecap="round" stroke-linejoin="round"><path d="M-10.5 -7.4H10.5"/><path d="M-4.6 -7.6C-4.4 -10.4 -3 -10.9 0 -10.9C3 -10.9 4.4 -10.4 4.6 -7.6Z" fill="#475569" fill-opacity="0.45"/><path d="M-8.6 -7.2L-7.2 8.2C-7 10 -5.8 10.8 -4 10.8H4C5.8 10.8 7 10 7.2 8.2L8.6 -7.2"/></g></svg>
<svg style="left:1310.3px;top:789.3px" width="28" height="22" viewBox="-14 -11 28 22"><path d="M-11.3 0C-9.6 -4.6 -5.2 -8.1 0 -8.1C5.2 -8.1 9.6 -4.6 11.3 0C9.6 4.6 5.2 8.1 0 8.1C-5.2 8.1 -9.6 4.6 -11.3 0Z" fill="none" stroke="#0b0d10" stroke-width="2.2" stroke-linejoin="round"/><circle r="3.2" fill="none" stroke="#0b0d10" stroke-width="2.1"/></svg>
<svg style="left:1358.4px;top:783.9px" width="30" height="32" viewBox="0 0 30 32"><g fill="none" stroke="#2a4868" stroke-width="2.3" stroke-linejoin="round" stroke-linecap="round"><rect x="3" y="1.4" width="8.1" height="8.4" rx="2.4"/><rect x="3" y="22.4" width="8.1" height="8.4" rx="2.4"/><rect x="19.9" y="4.1" width="8.1" height="8.0" rx="2.4"/><path d="M7.05 9.8V22.4 M23.4 12.3C22.6 15.6 21.4 17.1 18.6 17.1H10.6C8.4 17.1 7.05 18.4 7.05 20.8"/></g></svg>
<svg style="left:1863.8px;top:786.5px" width="26" height="26" viewBox="-13 -13 26 26"><circle r="10" fill="none" stroke="#16ad5c" stroke-width="2"/><path d="M-5.7 0.6L-2 4.2L5.3 -3.6" fill="none" stroke="#16ad5c" stroke-width="2.1" stroke-linecap="round" stroke-linejoin="round"/></svg>
<div style="position:absolute;box-sizing:border-box;left:1239px;top:843.7px;width:676px;height:183.79999999999995px;border-radius:26px;background:#fff;border:1.5px solid #e3e7ed;overflow:hidden;"><div style="position:absolute;left:-2px;right:-2px;top:122.59999999999991px;bottom:-2px;background:#e0e4ec;"></div></div>
<div style="position:absolute;box-sizing:border-box;left:1239px;top:843.7px;width:676px;height:124.59999999999991px;border-radius:26px 26px 0 0;border:1.6px solid #9ec5fe;border-bottom-color:transparent;"></div>
<span class="t" style="left:1253.60px;top:859.04px;font-size:25.11px;font-weight:400;color:#282c32;letter-spacing:0.592px;">fetch top 10 rows only based on maximum value</span>
<svg style="left:1267.3309734513273px;top:987.5028318584071px" width="20.93805309734513" height="22.194336283185837" viewBox="-13 -13 26 26" preserveAspectRatio="none"><g fill="none" stroke="#475569" stroke-width="1.92" stroke-linecap="round" stroke-linejoin="round"><path d="M-10.5 -7.4H10.5"/><path d="M-4.6 -7.6C-4.4 -10.4 -3 -10.9 0 -10.9C3 -10.9 4.4 -10.4 4.6 -7.6Z" fill="#475569" fill-opacity="0.45"/><path d="M-8.6 -7.2L-7.2 8.2C-7 10 -5.8 10.8 -4 10.8H4C5.8 10.8 7 10 7.2 8.2L8.6 -7.2"/></g></svg>
<svg style="left:1310.3px;top:988.3px" width="28" height="22" viewBox="-14 -11 28 22"><path d="M-11.3 0C-9.6 -4.6 -5.2 -8.1 0 -8.1C5.2 -8.1 9.6 -4.6 11.3 0C9.6 4.6 5.2 8.1 0 8.1C-5.2 8.1 -9.6 4.6 -11.3 0Z" fill="none" stroke="#0b0d10" stroke-width="2.2" stroke-linejoin="round"/><circle r="3.2" fill="none" stroke="#0b0d10" stroke-width="2.1"/></svg>
<svg style="left:1358.4px;top:982.9px" width="30" height="32" viewBox="0 0 30 32"><g fill="none" stroke="#2a4868" stroke-width="2.3" stroke-linejoin="round" stroke-linecap="round"><rect x="3" y="1.4" width="8.1" height="8.4" rx="2.4"/><rect x="3" y="22.4" width="8.1" height="8.4" rx="2.4"/><rect x="19.9" y="4.1" width="8.1" height="8.0" rx="2.4"/><path d="M7.05 9.8V22.4 M23.4 12.3C22.6 15.6 21.4 17.1 18.6 17.1H10.6C8.4 17.1 7.05 18.4 7.05 20.8"/></g></svg>
<svg style="left:1863.8px;top:985.5px" width="26" height="26" viewBox="-13 -13 26 26"><circle r="10" fill="none" stroke="#16ad5c" stroke-width="2"/><path d="M-5.7 0.6L-2 4.2L5.3 -3.6" fill="none" stroke="#16ad5c" stroke-width="2.1" stroke-linecap="round" stroke-linejoin="round"/></svg>
<div style="position:absolute;left:414px;top:1065px;width:1122px;height:11.5px;background:#8b8b8b;border-radius:6px;"></div>
<div style="position:absolute;left:0px;top:1076px;width:1920px;height:4px;background:#f1f1f1;border-top:1px solid #cfcfcf;box-sizing:border-box;"></div>
<div style="position:absolute;left:248.5px;top:1076.3px;width:1671.5px;height:3.7000000000000455px;background:#141414;"></div>
<div style="position:absolute;left:475px;top:1076.8px;width:55px;height:3.2000000000000455px;background:#6a6a6a;"></div>
</body></html>
